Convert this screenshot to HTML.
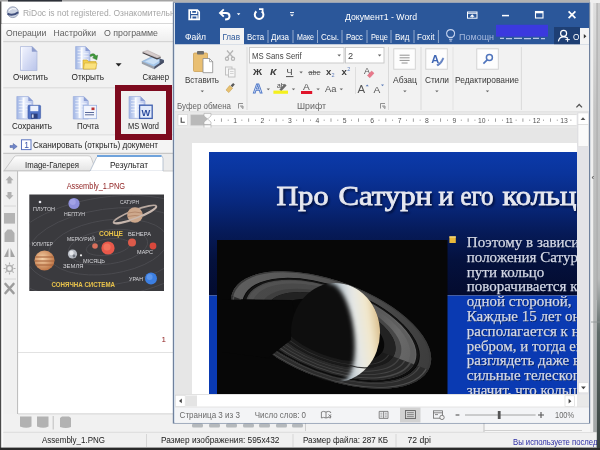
<!DOCTYPE html>
<html lang="ru">
<head>
<meta charset="utf-8">
<title>RiDoc - MS Word</title>
<style>
html,body{margin:0;padding:0;background:#f0f0f0;overflow:hidden}
body{width:600px;height:450px;font-family:"Liberation Sans",sans-serif}
svg{display:block}
</style>
</head>
<body>
<svg width="600" height="450" viewBox="0 0 600 450">
<filter id="fAll" filterUnits="userSpaceOnUse" x="0" y="0" width="600" height="450" color-interpolation-filters="sRGB"><feGaussianBlur stdDeviation="0.45" edgeMode="duplicate"/></filter>
<g filter="url(#fAll)">
<defs>
<linearGradient id="gPage" x1="0" y1="0" x2="1" y2="1">
 <stop offset="0" stop-color="#f4f6ff"/><stop offset="1" stop-color="#b9c4ea"/>
</linearGradient>
<linearGradient id="gPage2" x1="0" y1="0" x2="1" y2="0">
 <stop offset="0" stop-color="#9fb4e4"/><stop offset="0.5" stop-color="#e8eefc"/><stop offset="1" stop-color="#b4c2ea"/>
</linearGradient>
<linearGradient id="gSlide" x1="0" y1="0" x2="0" y2="1">
 <stop offset="0" stop-color="#0b3aaa"/><stop offset="0.15" stop-color="#0a349c"/><stop offset="0.35" stop-color="#08287e"/><stop offset="0.55" stop-color="#061b5a"/><stop offset="0.75" stop-color="#04113e"/><stop offset="1" stop-color="#030b2e"/>
</linearGradient>
<linearGradient id="gMenu" x1="0" y1="0" x2="0" y2="1">
 <stop offset="0" stop-color="#ffffff"/><stop offset="1" stop-color="#eeeeee"/>
</linearGradient>
<linearGradient id="gTab" x1="0" y1="0" x2="0" y2="1">
 <stop offset="0" stop-color="#ffffff"/><stop offset="1" stop-color="#e4e4e4"/>
</linearGradient>
<linearGradient id="gCres" gradientUnits="userSpaceOnUse" x1="344" y1="0" x2="381" y2="0">
 <stop offset="0" stop-color="#b8c4cc"/><stop offset="0.35" stop-color="#e6e8e6"/><stop offset="0.7" stop-color="#f2e8cc"/><stop offset="1" stop-color="#d8bc8a"/>
</linearGradient>
<filter id="fB2" x="-20%" y="-20%" width="140%" height="140%"><feGaussianBlur color-interpolation-filters="sRGB" stdDeviation="1.9"/></filter>
<radialGradient id="gJup" cx="0.4" cy="0.4" r="0.7">
 <stop offset="0" stop-color="#f6d2a8"/><stop offset="1" stop-color="#b86a3a"/>
</radialGradient>
<clipPath id="cWord"><rect x="175" y="3" width="414" height="419"/></clipPath>
<clipPath id="cSlide"><rect x="209" y="152" width="368" height="242"/></clipPath>
<clipPath id="cTitle"><rect x="0" y="0" width="173" height="24"/></clipPath>
<clipPath id="cPlanet"><ellipse cx="335.5" cy="332.5" rx="44.5" ry="49.5"/></clipPath>
<clipPath id="cFront"><polygon points="200,350 300,318 360,345 460,330 460,420 200,420"/></clipPath>
<filter id="fSh" x="-5%" y="-20%" width="110%" height="140%"><feGaussianBlur color-interpolation-filters="sRGB" stdDeviation="0.8"/></filter>
<filter id="fB" x="-5%" y="-5%" width="110%" height="110%"><feGaussianBlur color-interpolation-filters="sRGB" stdDeviation="1.2"/></filter>
<filter id="fb2" x="-5%" y="-5%" width="110%" height="110%"><feGaussianBlur color-interpolation-filters="sRGB" stdDeviation="0.5"/></filter>
</defs>
<g id="ridoc-window">
<rect x="0" y="0" width="600" height="450" fill="#f0f0f0" />
<rect x="0" y="0" width="600" height="23.5" fill="#ffffff" />
<line x1="0" y1="23.5" x2="175" y2="23.5" stroke="#d8d8d8" stroke-width="1" />
<g id="ridoc-icon"><ellipse cx="12.8" cy="12.2" rx="5.6" ry="5.4" fill="#ccd3e2" stroke="#8a94ac" stroke-width="0.8"/><path d="M7.6 13.6 q5 3 10.6 -1.4" stroke="#3f4e7c" stroke-width="2" fill="none"/><path d="M9 10.5 q3 -3 7 -1.5" stroke="#fff" stroke-width="1" fill="none"/></g>
<g clip-path="url(#cTitle)">
<text transform="translate(23 15.5) scale(0.885 1)" font-family="&quot;Liberation Sans&quot;, sans-serif" font-size="9.6" fill="#a6a6a6">RiDoc is not registered. Ознакомительная версия</text>
</g>
<rect x="2" y="24" width="172" height="17.5" fill="url(#gMenu)" />
<line x1="2" y1="41.8" x2="175" y2="41.8" stroke="#c9c9c9" stroke-width="1" />
<text x="6" y="36.1" textLength="40.4" lengthAdjust="spacingAndGlyphs" font-family="&quot;Liberation Sans&quot;, sans-serif" font-size="9.6" fill="#606060">Операции</text>
<text x="53.5" y="36.1" textLength="42.5" lengthAdjust="spacingAndGlyphs" font-family="&quot;Liberation Sans&quot;, sans-serif" font-size="9.6" fill="#606060">Настройки</text>
<text x="104" y="36.1" textLength="54" lengthAdjust="spacingAndGlyphs" font-family="&quot;Liberation Sans&quot;, sans-serif" font-size="9.6" fill="#606060">О программе</text>
<rect x="2" y="42.5" width="172" height="45" fill="#f1f1f1" />
<line x1="2" y1="88" x2="175" y2="88" stroke="#cfcfcf" stroke-width="1" />
<rect x="2" y="88.5" width="172" height="46" fill="#f1f1f1" />
<line x1="2" y1="135" x2="175" y2="135" stroke="#d4d4d4" stroke-width="1" />
<rect x="2" y="135.5" width="172" height="17.5" fill="#f4f4f4" />
<line x1="2" y1="153.3" x2="175" y2="153.3" stroke="#bdbdbd" stroke-width="1" />
<g id="btn-clear">
<path d="M20.5 46.5 h11.5 l5 5 v19 h-16.5 z" fill="url(#gPage)" stroke="#a9b4d8" stroke-width="0.7"/>
<path d="M32.0 46.5 v5 h5 z" fill="#8e9ccc" stroke="#8e9ccc" stroke-width="0.4"/>
<path d="M21.7 47.5 v22" stroke="#ffffff" stroke-width="1.2" opacity="0.8"/>
<text x="13" y="80" textLength="35" lengthAdjust="spacingAndGlyphs" font-family="&quot;Liberation Sans&quot;, sans-serif" font-size="9.2" fill="#1c1c1c">Очистить</text>
</g>
<g id="btn-open">
<path d="M75.6 46.5 h9.9 l4.5 4.5 v18.0 h-14.4 z" fill="url(#gPage2)" stroke="#9fb0dc" stroke-width="0.7"/>
<path d="M85.5 46.5 v4.5 h4.5 z" fill="#8c9ed4"/>
<path d="M81.648 47.5 v20.5" stroke="#ffffff" stroke-width="1.8" opacity="0.9"/>
<path d="M77.6 50.5 h4.32 M77.6 53.5 h4.32 M77.6 56.5 h4.32 M77.6 59.5 h4.32 M77.6 62.5 h4.32 M83.52 53.5 h5.04 M83.52 56.5 h5.04 M83.52 59.5 h5.04" stroke="#ffffff" stroke-width="0.8" opacity="0.6"/>
<g transform="translate(0 -2)">
<path d="M83 62 h4 l1.5 1.5 h7.5 v7.5 h-13 z" fill="#f3cf4e" stroke="#c9a22c" stroke-width="0.6"/>
<path d="M84.5 65 h12.5 l-1.5 6 h-12 z" fill="#fbe27e" stroke="#c9a22c" stroke-width="0.5"/>
<path d="M90 57 q4 -3 6 1 l1.6 -0.8 l-0.8 4.6 l-4.2 -2 l1.6 -0.8 q-1.6 -2.2 -3.6 -0.4 z" fill="#3f9a3a" stroke="#2a6e28" stroke-width="0.5"/>
</g>
<text x="71.6" y="80" textLength="32.4" lengthAdjust="spacingAndGlyphs" font-family="&quot;Liberation Sans&quot;, sans-serif" font-size="9.2" fill="#1c1c1c">Открыть</text>
<path d="M115.6 63.2 h6 l-3 3.2 z" fill="#222"/>
</g>
<g id="btn-scanner">
<path d="M141.8 61.6 l10.4 -5 l11.6 3.6 l-9.6 6.6 z" fill="#a4c6ea" stroke="#7d9cc4" stroke-width="0.5"/>
<path d="M145 61.4 l7.4 -3.4 l7.6 2.4 l-6.4 4.2 z" fill="#d4e6f8" opacity="0.8"/>
<path d="M141.8 61.6 v2.2 l12.4 5.4 v-2.4 z" fill="#9aa0aa"/><path d="M154.2 66.8 v2.4 l9.6 -6.6 v-2.4 z" fill="#4c546a"/>
<path d="M159.6 58.4 l4.2 1.6 v2.6 l-4.2 2.6 z" fill="#434a62" opacity="0.9"/>
<path d="M142.6 52 l5 -1.6 l13 6 l-3.6 1.4 z" fill="#d6cccc" stroke="#a89c9c" stroke-width="0.5"/>
<path d="M142.6 52.7 l14.4 6.1 l3.6 -1.4" fill="none" stroke="#4a4446" stroke-width="1.1"/>
<text x="142.6" y="80" textLength="26.4" lengthAdjust="spacingAndGlyphs" font-family="&quot;Liberation Sans&quot;, sans-serif" font-size="9.2" fill="#1c1c1c">Сканер</text>
</g>
<g id="btn-save">
<path d="M16.8 96.5 h11.5 l4.5 4.5 v18.0 h-16 z" fill="url(#gPage2)" stroke="#9fb0dc" stroke-width="0.7"/>
<path d="M28.299999999999997 96.5 v4.5 h4.5 z" fill="#8c9ed4"/>
<path d="M23.52 97.5 v20.5" stroke="#ffffff" stroke-width="1.8" opacity="0.9"/>
<path d="M18.8 100.5 h4.8 M18.8 103.5 h4.8 M18.8 106.5 h4.8 M18.8 109.5 h4.8 M18.8 112.5 h4.8 M25.6 103.5 h5.6 M25.6 106.5 h5.6 M25.6 109.5 h5.6" stroke="#ffffff" stroke-width="0.8" opacity="0.6"/>
<rect x="28" y="105.3" width="12.6" height="13.4" rx="1" fill="#5274c6" stroke="#3c57a4" stroke-width="0.6"/>
<rect x="30.3" y="105.8" width="8" height="5.4" fill="#eef2fc"/><rect x="31" y="113.6" width="6.6" height="5" fill="#2c3f7c"/><rect x="31.8" y="114.4" width="1.8" height="3.4" fill="#d0d8ee"/>
<text x="12" y="129" textLength="40" lengthAdjust="spacingAndGlyphs" font-family="&quot;Liberation Sans&quot;, sans-serif" font-size="9.2" fill="#1c1c1c">Сохранить</text>
</g>
<g id="btn-mail">
<path d="M73.3 96.5 h10.5 l4.5 4.5 v18.0 h-15 z" fill="url(#gPage2)" stroke="#9fb0dc" stroke-width="0.7"/>
<path d="M83.8 96.5 v4.5 h4.5 z" fill="#8c9ed4"/>
<path d="M79.6 97.5 v20.5" stroke="#ffffff" stroke-width="1.8" opacity="0.9"/>
<path d="M75.3 100.5 h4.5 M75.3 103.5 h4.5 M75.3 106.5 h4.5 M75.3 109.5 h4.5 M75.3 112.5 h4.5 M81.55 103.5 h5.25 M81.55 106.5 h5.25 M81.55 109.5 h5.25" stroke="#ffffff" stroke-width="0.8" opacity="0.6"/>
<rect x="83.2" y="105.3" width="13.4" height="13.4" fill="#f2f5fd" stroke="#9ab0e0" stroke-width="0.8"/>
<path d="M85 112.5 h9 M85 114.8 h9" stroke="#5a6a9a" stroke-width="1"/><rect x="91.5" y="107.5" width="3" height="2.6" fill="#b33"/>
<text x="77" y="129" textLength="22" lengthAdjust="spacingAndGlyphs" font-family="&quot;Liberation Sans&quot;, sans-serif" font-size="9.2" fill="#1c1c1c">Почта</text>
</g>
<g id="btn-msword">
<rect x="118" y="88" width="51" height="49" fill="#f0f0f0" stroke="#7d0a1e" stroke-width="6"/>
<path d="M129 96.5 h11.5 l4.5 4.5 v17.5 h-16 z" fill="url(#gPage2)" stroke="#9fb0dc" stroke-width="0.7"/>
<path d="M140.5 96.5 v4.5 h4.5 z" fill="#8c9ed4"/>
<path d="M135.72 97.5 v20" stroke="#ffffff" stroke-width="1.8" opacity="0.9"/>
<path d="M131 100.5 h4.8 M131 103.5 h4.8 M131 106.5 h4.8 M131 109.5 h4.8 M131 112.5 h4.8 M137.8 103.5 h5.6 M137.8 106.5 h5.6 M137.8 109.5 h5.6" stroke="#ffffff" stroke-width="0.8" opacity="0.6"/>
<rect x="139.6" y="105.2" width="12.6" height="13.2" fill="#e2eafa" stroke="#3f5fae" stroke-width="1.3"/>
<text x="141.6" y="115.6" textLength="8.8" lengthAdjust="spacingAndGlyphs" font-family="&quot;Liberation Sans&quot;, sans-serif" font-size="9.6" fill="#2d4d9e" font-weight="bold">W</text>
<text x="128" y="129" textLength="31" lengthAdjust="spacingAndGlyphs" font-family="&quot;Liberation Sans&quot;, sans-serif" font-size="9.2" fill="#1c1c1c">MS Word</text>
</g>
<g id="scan-row">
<path d="M10 145.5 h3.2 v-2 l4 3 l-4 3 v-2 h-3.2 z" fill="#6e84c8" stroke="#4a5f9e" stroke-width="0.5"/>
<rect x="21.5" y="139.8" width="9.5" height="9.8" fill="#ffffff" stroke="#5b74c0" stroke-width="1"/>
<text x="24.3" y="148" font-family="&quot;Liberation Sans&quot;, sans-serif" font-size="8.5" fill="#3a55a8">1</text>
<text x="33" y="148" textLength="125" lengthAdjust="spacingAndGlyphs" font-family="&quot;Liberation Sans&quot;, sans-serif" font-size="9.2" fill="#1c1c1c">Сканировать (открыть) документ</text>
</g>
<g id="tabs">
<rect x="2" y="154" width="172" height="19" fill="#ececec" />
<path d="M4 170.8 L14 157 q1 -1.2 3 -1.2 H88 q2 0 3 1.5 L96 170.8 z" fill="url(#gTab)" stroke="#b8b8b8" stroke-width="0.7"/>
<path d="M90 171.2 L96.5 157.6 q1 -2 3.5 -2 H160 q3 0 3 3 V171.2 z" fill="#ffffff" stroke="#a9b7c9" stroke-width="0.8"/>
<path d="M97 156 H161.5" stroke="#6fa3dc" stroke-width="2.2"/>
<text x="25" y="168" textLength="54" lengthAdjust="spacingAndGlyphs" font-family="&quot;Liberation Sans&quot;, sans-serif" font-size="9.2" fill="#222">Image-Галерея</text>
<text x="110" y="168" textLength="38" lengthAdjust="spacingAndGlyphs" font-family="&quot;Liberation Sans&quot;, sans-serif" font-size="9.2" fill="#222">Результат</text>
</g>
<g id="result-panel">
<rect x="2" y="171" width="16" height="262" fill="#f0f0f0" />
<rect x="17.6" y="171" width="156.4" height="243" fill="#ffffff" />
<line x1="17.6" y1="171" x2="17.6" y2="414" stroke="#b9b9b9" stroke-width="1" />
<line x1="18" y1="414" x2="174" y2="414" stroke="#c4c4c4" stroke-width="1" />
<line x1="2" y1="171" x2="90" y2="171" stroke="#c4c4c4" stroke-width="0.8" />
<line x1="163" y1="171" x2="174" y2="171" stroke="#c4c4c4" stroke-width="0.8" />
<line x1="18" y1="352.5" x2="174" y2="352.5" stroke="#e2e2e2" stroke-width="1" />
<path d="M9.5 176 l4 4.2 h-2 v3.4 h-4 v-3.4 h-2 z" fill="#b0b0b0"/>
<path d="M9.5 199.5 l4 -4.2 h-2 v-3.4 h-4 v3.4 h-2 z" fill="#b0b0b0"/>
<line x1="4" y1="206" x2="16" y2="206" stroke="#d0d0d0" stroke-width="0.8" />
<rect x="4" y="213" width="11" height="10.6" fill="#b4b4b4"/>
<path d="M4.5 233 l3 -3.5 h4 l3 3.5 v9 h-10 z" fill="#b0b0b0"/>
<path d="M4 257 l4.5 -9 v9 z M10.5 257 v-9 l4.5 9 z" fill="#a4a4a4"/>
<circle cx="9.5" cy="268.5" r="3" fill="none" stroke="#b0b0b0" stroke-width="1.6"/><path d="M9.5 262.5 v2 M9.5 272.5 v2 M3.5 268.5 h2 M13.5 268.5 h2 M5.3 264.3 l1.4 1.4 M12.3 271.3 l1.4 1.4 M5.3 272.7 l1.4 -1.4 M12.3 265.7 l1.4 -1.4" stroke="#b0b0b0" stroke-width="1.1"/>
<line x1="4" y1="279" x2="16" y2="279" stroke="#d0d0d0" stroke-width="0.8" />
<path d="M5.5 284 l8 9 M13.5 284 l-8 9" stroke="#9c9c9c" stroke-width="2.6" stroke-linecap="round"/>
<text x="66.7" y="189" textLength="58.3" lengthAdjust="spacingAndGlyphs" font-family="&quot;Liberation Sans&quot;, sans-serif" font-size="8.8" fill="#8d1c1c">Assembly_1.PNG</text>
<text x="161.5" y="342" font-family="&quot;Liberation Sans&quot;, sans-serif" font-size="8" fill="#8d1c1c">1</text>
</g>
<g id="thumbnail">
<rect x="29.3" y="194.5" width="134.7" height="96.5" fill="#3a3a3e" />
<clipPath id="cThumb"><rect x="29.3" y="194.5" width="134.7" height="96.5"/></clipPath><g clip-path="url(#cThumb)">
<ellipse cx="108" cy="247" rx="22" ry="8" fill="none" stroke="#5a5a60" stroke-width="0.5" transform="rotate(-8 108 247)"/>
<ellipse cx="108" cy="247" rx="40" ry="17" fill="none" stroke="#5a5a60" stroke-width="0.5" transform="rotate(-8 108 247)"/>
<ellipse cx="108" cy="247" rx="60" ry="27" fill="none" stroke="#5a5a60" stroke-width="0.5" transform="rotate(-8 108 247)"/>
<ellipse cx="108" cy="247" rx="82" ry="38" fill="none" stroke="#5a5a60" stroke-width="0.5" transform="rotate(-8 108 247)"/>
<ellipse cx="108" cy="247" rx="104" ry="50" fill="none" stroke="#5a5a60" stroke-width="0.5" transform="rotate(-8 108 247)"/>
</g>
<circle cx="40" cy="202" r="1.3" fill="#e8e8ee"/>
<text x="33" y="211" textLength="22" lengthAdjust="spacingAndGlyphs" font-family="&quot;Liberation Sans&quot;, sans-serif" font-size="6.2" fill="#d6d6da">ПЛУТОН</text>
<circle cx="74" cy="203.5" r="5.6" fill="#8f90dc"/><circle cx="72.8" cy="202" r="3" fill="#a9a9ea" opacity="0.7"/>
<text x="64" y="216" textLength="21" lengthAdjust="spacingAndGlyphs" font-family="&quot;Liberation Sans&quot;, sans-serif" font-size="6.2" fill="#d6d6da">НЕПТУН</text>
<text x="120" y="204" textLength="19" lengthAdjust="spacingAndGlyphs" font-family="&quot;Liberation Sans&quot;, sans-serif" font-size="6.2" fill="#d6d6da">САТУРН</text>
<ellipse cx="135" cy="214.5" rx="23" ry="4.2" fill="none" stroke="#b9a9a0" stroke-width="1.6" transform="rotate(-21 135 214.5)"/>
<circle cx="135" cy="215" r="7.8" fill="#cda88c"/><path d="M128 213 q7 -2 14 0 M127.5 216.5 q7.5 -2 15 0" stroke="#b58a6e" stroke-width="1" fill="none"/>
<path d="M113.8 222.6 A23 4.2 -21 0 0 156.4 206.3" fill="none" stroke="#c9b9b0" stroke-width="1.5"/>
<text x="99" y="236" textLength="24" lengthAdjust="spacingAndGlyphs" font-family="&quot;Liberation Sans&quot;, sans-serif" font-size="6.4" fill="#e8c24a" font-weight="bold">СОНЦЕ</text>
<circle cx="108" cy="248" r="6.6" fill="#e9584a"/><circle cx="107" cy="247" r="3.6" fill="#f47a62" opacity="0.8"/>
<text x="67" y="240.5" textLength="28" lengthAdjust="spacingAndGlyphs" font-family="&quot;Liberation Sans&quot;, sans-serif" font-size="6.2" fill="#d6d6da">МЕРКУРИЙ</text>
<circle cx="95" cy="246" r="2.8" fill="#d9705c"/>
<text x="128" y="236" textLength="23" lengthAdjust="spacingAndGlyphs" font-family="&quot;Liberation Sans&quot;, sans-serif" font-size="6.2" fill="#d6d6da">ВЕНЕРА</text>
<circle cx="132" cy="242.5" r="4" fill="#dc5a4a"/>
<text x="137" y="254" textLength="16" lengthAdjust="spacingAndGlyphs" font-family="&quot;Liberation Sans&quot;, sans-serif" font-size="6.2" fill="#d6d6da">МАРС</text>
<circle cx="153" cy="246" r="3.4" fill="#d9483c"/>
<text x="32" y="246" textLength="21" lengthAdjust="spacingAndGlyphs" font-family="&quot;Liberation Sans&quot;, sans-serif" font-size="6.2" fill="#d6d6da">ЮПИТЕР</text>
<circle cx="44.5" cy="260.5" r="10" fill="url(#gJup)"/>
<path d="M35.2 257 h18.6 M34.8 261 h19.4 M35.6 265 h17.8" stroke="#a8643c" stroke-width="1.3" opacity="0.75"/>
<circle cx="72.5" cy="254" r="4.6" fill="#b8bcc4"/><circle cx="71.5" cy="253" r="2.2" fill="#e6e8ec"/><circle cx="74" cy="256" r="1.4" fill="#70757e"/>
<circle cx="81" cy="255.3" r="1.1" fill="#f0f0f0"/>
<text x="83" y="263" textLength="22" lengthAdjust="spacingAndGlyphs" font-family="&quot;Liberation Sans&quot;, sans-serif" font-size="6.2" fill="#d6d6da">МІСЯЦЬ</text>
<text x="63" y="268" textLength="20.5" lengthAdjust="spacingAndGlyphs" font-family="&quot;Liberation Sans&quot;, sans-serif" font-size="6.2" fill="#d6d6da">ЗЕМЛЯ</text>
<text x="129" y="281" textLength="14" lengthAdjust="spacingAndGlyphs" font-family="&quot;Liberation Sans&quot;, sans-serif" font-size="6.2" fill="#d6d6da">УРАН</text>
<circle cx="151" cy="278.5" r="6" fill="#3c7fe2"/><circle cx="149.6" cy="277" r="3" fill="#69a0f0" opacity="0.7"/>
<text x="51.5" y="287" textLength="63.5" lengthAdjust="spacingAndGlyphs" font-family="&quot;Liberation Sans&quot;, sans-serif" font-size="6.4" fill="#e8c24a" font-weight="bold">СОНЯЧНА СИСТЕМА</text>
</g>
<g id="ridoc-status">
<rect x="2" y="414.5" width="598" height="18" fill="#f1f1f1" />
<path d="M20 416.5 h11.5 v10 q-5 2.5 -11.5 0 z" fill="#b2b2b2"/>
<path d="M37 416.5 h11.5 v10 q-5 2.5 -11.5 0 z" fill="#b2b2b2"/>
<line x1="53.2" y1="416" x2="53.2" y2="429.5" stroke="#b8b8b8" stroke-width="0.9" />
<path d="M60 418 l2 -1.5 h7 l2 1.5 v9 q-5 2 -11 0 z" fill="#b2b2b2"/>
<rect x="192" y="423.6" width="11" height="4" rx="1.5" fill="#aeb2b6" opacity="0.9"/>
<rect x="209" y="423.6" width="11" height="4" rx="1.5" fill="#aeb2b6" opacity="0.9"/>
<rect x="226" y="423.6" width="11" height="4" rx="1.5" fill="#aeb2b6" opacity="0.9"/>
<rect x="243" y="423.6" width="11" height="4" rx="1.5" fill="#aeb2b6" opacity="0.9"/>
<rect x="259" y="423.6" width="11" height="4" rx="1.5" fill="#aeb2b6" opacity="0.9"/>
<rect x="276" y="423.6" width="11" height="4" rx="1.5" fill="#aeb2b6" opacity="0.9"/>
<rect x="292" y="423.6" width="11" height="4" rx="1.5" fill="#aeb2b6" opacity="0.9"/>
<line x1="305.5" y1="423" x2="305.5" y2="431" stroke="#c8c8c8" stroke-width="0.9" />
<line x1="2" y1="432.3" x2="600" y2="432.3" stroke="#dcdcdc" stroke-width="1" />
<rect x="2" y="433" width="598" height="15" fill="#f0f0f0" />
<line x1="146.5" y1="434" x2="146.5" y2="447" stroke="#d6d6d6" stroke-width="1" />
<line x1="293" y1="434" x2="293" y2="447" stroke="#d6d6d6" stroke-width="1" />
<line x1="396" y1="434" x2="396" y2="447" stroke="#d6d6d6" stroke-width="1" />
<text x="42" y="443" textLength="63" lengthAdjust="spacingAndGlyphs" font-family="&quot;Liberation Sans&quot;, sans-serif" font-size="8.8" fill="#1c1c1c">Assembly_1.PNG</text>
<text x="161" y="443" textLength="118.5" lengthAdjust="spacingAndGlyphs" font-family="&quot;Liberation Sans&quot;, sans-serif" font-size="8.8" fill="#1c1c1c">Размер изображения: 595x432</text>
<text x="303" y="443" textLength="85" lengthAdjust="spacingAndGlyphs" font-family="&quot;Liberation Sans&quot;, sans-serif" font-size="8.8" fill="#1c1c1c">Размер файла: 287 КБ</text>
<text x="407.5" y="443" textLength="23.5" lengthAdjust="spacingAndGlyphs" font-family="&quot;Liberation Sans&quot;, sans-serif" font-size="8.8" fill="#1c1c1c">72 dpi</text>
<text x="513" y="445.2" textLength="84.5" lengthAdjust="spacingAndGlyphs" font-family="&quot;Liberation Sans&quot;, sans-serif" font-size="9" fill="#2b2ba4">Вы используете послед</text>
</g>
<rect x="0" y="0" width="1.4" height="450" fill="#4a4a4a" />
<rect x="1.4" y="24" width="1.8" height="424" fill="#fbfbfb" />
<rect x="0" y="447.6" width="600" height="2.4" fill="#2a2a2a" />
<rect x="0" y="0" width="600" height="1.5" fill="#a4a4a4" />
<rect x="8" y="0" width="54" height="1.5" fill="#2c3038" />
<rect x="173" y="0" width="418" height="2.5" fill="#b2b2b2" />
</g>
<g id="right-strip">
<linearGradient id="gRS1" x1="0" y1="0" x2="0" y2="1"><stop offset="0" stop-color="#dedede"/><stop offset="0.25" stop-color="#c4c4c4"/><stop offset="0.7" stop-color="#b4b6b6"/><stop offset="1" stop-color="#a4a8a8"/></linearGradient>
<linearGradient id="gRS2" x1="0" y1="0" x2="0" y2="1"><stop offset="0" stop-color="#cccccc"/><stop offset="0.62" stop-color="#b8baba"/><stop offset="0.74" stop-color="#5e6a68"/><stop offset="1" stop-color="#38423f"/></linearGradient>
<rect x="590" y="0" width="10" height="432" fill="#efefef" />
<rect x="593.2" y="3" width="3.6" height="429" fill="url(#gRS1)" />
<rect x="596.8" y="3" width="3.2" height="445" fill="url(#gRS2)" />
<line x1="597" y1="3" x2="597" y2="300" stroke="#a2a2a2" stroke-width="0.9" />
<line x1="591" y1="322" x2="600" y2="322" stroke="#8c9292" stroke-width="0.8" />
<text x="591.6" y="180" font-family="&quot;Liberation Sans&quot;, sans-serif" font-size="8" fill="#333">‹</text>
</g>
<g id="under-word">
<rect x="484" y="422" width="106" height="10" fill="#f6f6f6" />
<line x1="484" y1="422" x2="484" y2="432" stroke="#c0c0c0" stroke-width="1" />
<line x1="484" y1="430.5" x2="582" y2="430.5" stroke="#d0d0d0" stroke-width="1" />
</g>
<g id="word-window">
<rect x="172.8" y="2.3" width="417.4" height="421.3" fill="#6f819d" />
<rect x="174.1" y="2.9" width="414.9" height="419.9" fill="#e4ebf5" />
<rect x="175" y="3" width="414" height="419.7" fill="#f3f3f3" />
<rect x="175" y="3" width="414" height="41.5" fill="#2b579a" />
<g id="qat" fill="none" stroke="#fff">
<path d="M189.2 10.2 h8.2 l1.8 1.8 v7.4 h-10 z" stroke-width="1.7"/><path d="M191.6 10.4 v3 h5 v-3 M191.8 19.2 v-3.4 h5.2 v3.4" stroke-width="1.3"/>
<path d="M220.5 13 h5.4 q3.6 0 3.6 3.2 q0 3.2 -4.4 3.2" stroke-width="2"/><path d="M223.8 9.4 l-3.8 3.6 l3.8 3.6" stroke-width="1.9"/>
<path d="M236.8 13.2 h3.6 l-1.8 2 z" fill="#fff" stroke="none"/>
<path d="M261.8 11.4 a4.3 4.3 0 1 1 -5.4 0" stroke-width="2"/><path d="M259 9.2 h3.6 v3.6" stroke-width="1.7"/>
<path d="M290 12.6 h4" stroke-width="1"/><path d="M290 14.6 h4 l-2 2 z" fill="#fff" stroke="none"/>
</g>
<text x="345" y="20" textLength="72" lengthAdjust="spacingAndGlyphs" font-family="&quot;Liberation Sans&quot;, sans-serif" font-size="9.6" fill="#ffffff">Документ1 - Word</text>
<g id="win-ctl" fill="none" stroke="#fff">
<rect x="467.5" y="12" width="9.5" height="6.2" stroke-width="1"/><path d="M469.8 16.8 l2.4 -2.6 l2.4 2.6 z" fill="#fff" stroke="none"/><path d="M472.2 15 v2.6" stroke-width="1"/><path d="M467.5 13.4 h9.5" stroke-width="0.8"/>
<path d="M502 15.6 h7" stroke-width="1.5"/>
<rect x="535.5" y="11.5" width="7.5" height="6.5" stroke-width="1.1"/><path d="M535.5 12.6 h7.5" stroke-width="1.4"/>
<path d="M568.6 11.4 l6.8 6.8 M575.4 11.4 l-6.8 6.8" stroke-width="1.7"/>
</g>
<g id="word-tabs">
<text x="185" y="39.6" textLength="21" lengthAdjust="spacingAndGlyphs" font-family="&quot;Liberation Sans&quot;, sans-serif" font-size="9.4" fill="#ffffff">Файл</text>
<rect x="220" y="28" width="24" height="16.5" fill="#f3f3f3" />
<text x="222.4" y="39.6" textLength="17.6" lengthAdjust="spacingAndGlyphs" font-family="&quot;Liberation Sans&quot;, sans-serif" font-size="9.4" fill="#2b579a">Глав</text>
<text x="247" y="39.6" textLength="17" lengthAdjust="spacingAndGlyphs" font-family="&quot;Liberation Sans&quot;, sans-serif" font-size="9.4" fill="#ffffff">Вста</text>
<text x="271" y="39.6" textLength="18" lengthAdjust="spacingAndGlyphs" font-family="&quot;Liberation Sans&quot;, sans-serif" font-size="9.4" fill="#ffffff">Диза</text>
<text x="297" y="39.6" textLength="17" lengthAdjust="spacingAndGlyphs" font-family="&quot;Liberation Sans&quot;, sans-serif" font-size="9.4" fill="#ffffff">Маке</text>
<text x="321" y="39.6" textLength="18" lengthAdjust="spacingAndGlyphs" font-family="&quot;Liberation Sans&quot;, sans-serif" font-size="9.4" fill="#ffffff">Ссы.</text>
<text x="346" y="39.6" textLength="17" lengthAdjust="spacingAndGlyphs" font-family="&quot;Liberation Sans&quot;, sans-serif" font-size="9.4" fill="#ffffff">Расс</text>
<text x="371" y="39.6" textLength="17" lengthAdjust="spacingAndGlyphs" font-family="&quot;Liberation Sans&quot;, sans-serif" font-size="9.4" fill="#ffffff">Реце</text>
<text x="395" y="39.6" textLength="14.4" lengthAdjust="spacingAndGlyphs" font-family="&quot;Liberation Sans&quot;, sans-serif" font-size="9.4" fill="#ffffff">Вид</text>
<text x="417" y="39.6" textLength="17.4" lengthAdjust="spacingAndGlyphs" font-family="&quot;Liberation Sans&quot;, sans-serif" font-size="9.4" fill="#ffffff">Foxit</text>
<line x1="268" y1="30" x2="268" y2="43" stroke="#9fb3d4" stroke-width="0.9" />
<line x1="293" y1="30" x2="293" y2="43" stroke="#9fb3d4" stroke-width="0.9" />
<line x1="317.5" y1="30" x2="317.5" y2="43" stroke="#9fb3d4" stroke-width="0.9" />
<line x1="342" y1="30" x2="342" y2="43" stroke="#9fb3d4" stroke-width="0.9" />
<line x1="367" y1="30" x2="367" y2="43" stroke="#9fb3d4" stroke-width="0.9" />
<line x1="391" y1="30" x2="391" y2="43" stroke="#9fb3d4" stroke-width="0.9" />
<line x1="414" y1="30" x2="414" y2="43" stroke="#9fb3d4" stroke-width="0.9" />
<line x1="438.4" y1="30" x2="438.4" y2="43" stroke="#9fb3d4" stroke-width="0.9" />
<g fill="none" stroke="#c4d2ee" stroke-width="1.1"><path d="M448.8 37.4 q-2.6 -2 -2.2 -4.4 q0.6 -3.4 4 -3.4 q3.4 0 4 3.4 q0.4 2.4 -2.2 4.4 z"/><path d="M449 39.2 h3.4 M449.6 41 h2.2"/></g>
<text x="459" y="39.6" textLength="35" lengthAdjust="spacingAndGlyphs" font-family="&quot;Liberation Sans&quot;, sans-serif" font-size="9.4" fill="#a6b9dd">Помощн</text>
<path d="M500 38.3 h4 M506 38.6 h6 M514 38.3 h8 M524 38.6 h7 M533 38.3 h6 M541 38.6 h4" stroke="#b9c6e4" stroke-width="1.2"/>
<rect x="496" y="24.8" width="52" height="11.8" fill="#3b39de" />
<rect x="554" y="27" width="26" height="17.5" fill="#1e3f74" />
<g fill="none" stroke="#fff" stroke-width="1.2"><circle cx="563.6" cy="33.4" r="3"/><path d="M558.4 41.4 q0.6 -4.6 5.2 -4.6 q2.4 0 3.6 1.2"/><path d="M565.4 39.6 h4.4 M567.6 37.4 v4.4" stroke-width="1"/></g>
<text x="573" y="39.8" textLength="6.4" lengthAdjust="spacingAndGlyphs" font-family="&quot;Liberation Sans&quot;, sans-serif" font-size="9.6" fill="#ffffff">О</text>
<rect x="580" y="28" width="9" height="16.5" fill="#f4f4f4" />
<path d="M583.8 34 v4.6 l2.6 -2.3 z" fill="#333"/>
</g>
<g id="ribbon">
<rect x="175" y="44.5" width="414" height="67.5" fill="#f2f2f2" />
<line x1="175" y1="112" x2="589" y2="112" stroke="#d6d6d6" stroke-width="1" />
<g id="grp-clipboard">
<rect x="193.5" y="53" width="14" height="18.5" rx="1" fill="#e9bf72" stroke="#c79a4a" stroke-width="0.7"/>
<rect x="197" y="51" width="7" height="3.6" rx="0.8" fill="#6d6d6d"/>
<path d="M203 58.5 h6.5 l3.2 3.2 v11 h-9.7 z" fill="#ffffff" stroke="#8a8a8a" stroke-width="0.8"/><path d="M209.5 58.5 v3.2 h3.2" fill="none" stroke="#8a8a8a" stroke-width="0.7"/>
<text x="185" y="83" textLength="34" lengthAdjust="spacingAndGlyphs" font-family="&quot;Liberation Sans&quot;, sans-serif" font-size="9.2" fill="#3a3a3a">Вставить</text>
<path d="M200.6 90.4 h3.4 l-1.7 1.9 z" fill="#666"/>
<g stroke="#b4b4b4" stroke-width="1.2" fill="none"><path d="M227 50.5 l6 7 M233 50.5 l-6 7"/><circle cx="227" cy="58.8" r="1.6"/><circle cx="233" cy="58.8" r="1.6"/></g>
<g stroke="#bdbdbd" stroke-width="0.9" fill="#f6f6f6"><rect x="225.5" y="67" width="6.5" height="8"/><rect x="228.5" y="69" width="6.5" height="8"/></g><path d="M230 71.5 h3.6 M230 73.5 h3.6" stroke="#c6c6c6" stroke-width="0.7"/>
<path d="M226 90 l3.6 -4.4 l3 2.6 l-3.8 4.4 z" fill="#e7c070" stroke="#c29a44" stroke-width="0.5"/><path d="M230.6 85.6 l2.6 -2.6 l1.6 1.5 l-2.4 2.8 z" fill="#5a5a5a"/>
<text x="177" y="109" textLength="54" lengthAdjust="spacingAndGlyphs" font-family="&quot;Liberation Sans&quot;, sans-serif" font-size="9" fill="#666">Буфер обмена</text>
<path d="M238.5 103.5 h-0 v5 M238.5 103.5 h4.5 M240.5 106 h2.5 v2.6 M243 108.6 l-2.6 -2.6" stroke="#777" stroke-width="0.8" fill="none"/>
</g>
<line x1="247" y1="47" x2="247" y2="110" stroke="#dadada" stroke-width="1" />
<g id="grp-font">
<rect x="249.5" y="47.5" width="94.5" height="15.5" fill="#ffffff" stroke="#c6c6c6" stroke-width="0.9"/>
<rect x="345.5" y="47.5" width="38.5" height="15.5" fill="#ffffff" stroke="#c6c6c6" stroke-width="0.9"/>
<text x="252" y="59.4" textLength="49.7" lengthAdjust="spacingAndGlyphs" font-family="&quot;Liberation Sans&quot;, sans-serif" font-size="9.2" fill="#444">MS Sans Serif</text>
<text x="348" y="59.4" font-family="&quot;Liberation Sans&quot;, sans-serif" font-size="9.2" fill="#444">2</text>
<path d="M337.4 54.4 h3.6 l-1.8 2 z M377.8 54.4 h3.6 l-1.8 2 z" fill="#666"/>
<text x="253" y="75.4" textLength="9" lengthAdjust="spacingAndGlyphs" font-family="&quot;Liberation Sans&quot;, sans-serif" font-size="9.6" fill="#3a3a3a" font-weight="bold">Ж</text>
<text x="270" y="75.4" textLength="6.4" lengthAdjust="spacingAndGlyphs" font-family="&quot;Liberation Sans&quot;, sans-serif" font-size="9.6" fill="#3a3a3a" font-weight="bold" font-style="italic">К</text>
<text x="286.6" y="75" textLength="6.0" lengthAdjust="spacingAndGlyphs" font-family="&quot;Liberation Sans&quot;, sans-serif" font-size="9.4" fill="#3a3a3a">Ч</text>
<line x1="286" y1="76.6" x2="293.4" y2="76.6" stroke="#3a3a3a" stroke-width="0.9" />
<path d="M299.4 71.6 h3.4 l-1.7 1.9 z" fill="#666"/>
<text x="308.6" y="75" textLength="11.4" lengthAdjust="spacingAndGlyphs" font-family="&quot;Liberation Sans&quot;, sans-serif" font-size="8" fill="#555">abc</text>
<line x1="308" y1="72.4" x2="320.6" y2="72.4" stroke="#555" stroke-width="0.7" />
<text x="326" y="75" font-family="&quot;Liberation Sans&quot;, sans-serif" font-size="9.6" fill="#3a3a3a" font-weight="bold">x</text>
<text x="331.6" y="77" font-family="&quot;Liberation Sans&quot;, sans-serif" font-size="5.5" fill="#5a7ab8">2</text>
<text x="341.6" y="75" font-family="&quot;Liberation Sans&quot;, sans-serif" font-size="9.6" fill="#3a3a3a" font-weight="bold">x</text>
<text x="347.2" y="70.6" font-family="&quot;Liberation Sans&quot;, sans-serif" font-size="5.5" fill="#5a7ab8">2</text>
<line x1="355.5" y1="67" x2="355.5" y2="94" stroke="#dedede" stroke-width="1" />
<text x="364" y="74" font-family="&quot;Liberation Sans&quot;, sans-serif" font-size="9" fill="#555">A</text>
<path d="M367.4 75.6 l4.2 -4.6 l2.4 2.2 l-4.2 4.6 z" fill="#e8788a" stroke="#d25a70" stroke-width="0.4"/>
<text x="253" y="92.6" textLength="9.4" lengthAdjust="spacingAndGlyphs" font-family="&quot;Liberation Sans&quot;, sans-serif" font-size="13.5" fill="#eef3ff" font-weight="bold" stroke="#4f78c8" stroke-width="0.9">A</text>
<path d="M266.6 88.4 h3.4 l-1.7 1.9 z" fill="#666"/>
<text x="277" y="87.6" textLength="7.6" lengthAdjust="spacingAndGlyphs" font-family="&quot;Liberation Sans&quot;, sans-serif" font-size="7" fill="#444">ab</text>
<path d="M279.4 89.6 l5.4 -5.8 l1.8 1.6 l-5.4 5.8 z" fill="#6a6a6a"/>
<rect x="273.4" y="90.6" width="14.6" height="3.2" fill="#f4f01e" />
<path d="M291.8 88.4 h3.4 l-1.7 1.9 z" fill="#666"/>
<text x="303" y="90.4" textLength="6.8" lengthAdjust="spacingAndGlyphs" font-family="&quot;Liberation Sans&quot;, sans-serif" font-size="8.8" fill="#555">A</text>
<rect x="301" y="91" width="11.2" height="3" fill="#e0142a" />
<path d="M316.4 88.4 h3.4 l-1.7 1.9 z" fill="#666"/>
<text x="325" y="91.6" textLength="11.4" lengthAdjust="spacingAndGlyphs" font-family="&quot;Liberation Sans&quot;, sans-serif" font-size="9.4" fill="#555">Aa</text>
<path d="M339.6 88.4 h3.4 l-1.7 1.9 z" fill="#666"/>
<text x="357.4" y="92.6" textLength="7.6" lengthAdjust="spacingAndGlyphs" font-family="&quot;Liberation Sans&quot;, sans-serif" font-size="10.6" fill="#555">A</text>
<path d="M365.6 86.2 l1.6 -1.8 l1.6 1.8 z" fill="#5a7ab8"/>
<text x="373.6" y="92.6" textLength="6.8" lengthAdjust="spacingAndGlyphs" font-family="&quot;Liberation Sans&quot;, sans-serif" font-size="9.4" fill="#555">A</text>
<path d="M381 84.6 l1.5 1.7 l1.5 -1.7 z" fill="#5a7ab8"/>
<text x="297" y="109" textLength="29" lengthAdjust="spacingAndGlyphs" font-family="&quot;Liberation Sans&quot;, sans-serif" font-size="9" fill="#666">Шрифт</text>
<path d="M380.5 103.5 v5 M380.5 103.5 h4.5 M382.5 106 h2.5 v2.6 M385 108.6 l-2.6 -2.6" stroke="#777" stroke-width="0.8" fill="none"/>
</g>
<line x1="388.5" y1="47" x2="388.5" y2="110" stroke="#dadada" stroke-width="1" />
<g id="grp-para">
<rect x="393.8" y="48.8" width="21.5" height="20.4" fill="#fdfdfd" stroke="#d0d0d0" stroke-width="0.9"/>
<path d="M399.6 55.2 h10 M399.6 57.8 h10 M399.6 60.4 h10 M401.6 63 h6" stroke="#777" stroke-width="0.8"/>
<text x="393" y="83" textLength="24" lengthAdjust="spacingAndGlyphs" font-family="&quot;Liberation Sans&quot;, sans-serif" font-size="9.2" fill="#3a3a3a">Абзац</text>
<path d="M403.2 90.4 h3.4 l-1.7 1.9 z" fill="#666"/>
</g>
<line x1="421" y1="47" x2="421" y2="110" stroke="#dadada" stroke-width="1" />
<g id="grp-styles">
<rect x="425.8" y="48.8" width="21.5" height="20.4" fill="#fdfdfd" stroke="#d0d0d0" stroke-width="0.9"/>
<text x="431.2" y="63.4" font-family="&quot;Liberation Sans&quot;, sans-serif" font-size="11" fill="#3f66b4" font-weight="bold">A</text>
<path d="M436.8 64.6 q3.8 -1.4 6 -6.8 l1 0.8 q-2 5.6 -6 7.4 z" fill="#6a86c4" stroke="#3f66b4" stroke-width="0.5"/>
<text x="425" y="83" textLength="24" lengthAdjust="spacingAndGlyphs" font-family="&quot;Liberation Sans&quot;, sans-serif" font-size="9.2" fill="#3a3a3a">Стили</text>
<path d="M435.2 90.4 h3.4 l-1.7 1.9 z" fill="#666"/>
</g>
<line x1="453" y1="47" x2="453" y2="110" stroke="#e2e2e2" stroke-width="1" />
<g id="grp-edit">
<rect x="476.8" y="48.8" width="21.5" height="20.4" fill="#fdfdfd" stroke="#d0d0d0" stroke-width="0.9"/>
<circle cx="489.4" cy="57.4" r="3" fill="none" stroke="#4f74bc" stroke-width="1.5"/><path d="M487.2 59.8 l-3.8 3.8" stroke="#4f74bc" stroke-width="1.7"/>
<text x="455" y="83" textLength="64" lengthAdjust="spacingAndGlyphs" font-family="&quot;Liberation Sans&quot;, sans-serif" font-size="9.2" fill="#3a3a3a">Редактирование</text>
<path d="M485.8 90.4 h3.4 l-1.7 1.9 z" fill="#666"/>
</g>
<line x1="521.4" y1="47" x2="521.4" y2="110" stroke="#dadada" stroke-width="1" />
<path d="M576.4 107.4 l2.8 -2.9 l2.8 2.9" stroke="#555" stroke-width="1.3" fill="none"/>
</g>
<g id="ruler">
<rect x="175" y="112.5" width="402" height="15" fill="#e9e9e9" />
<rect x="178" y="114.6" width="9.6" height="11" fill="#ffffff" stroke="#d0d0d0" stroke-width="0.6"/>
<path d="M181.2 117.6 v4.6 h3.6" stroke="#444" stroke-width="1.1" fill="none"/>
<rect x="190.6" y="114.8" width="17.4" height="10.6" fill="#b9b9b9" />
<rect x="208" y="114.8" width="368.6" height="10.6" fill="#ffffff" />
<line x1="190.6" y1="114.6" x2="576.6" y2="114.6" stroke="#d2d2d2" stroke-width="0.6" />
<line x1="190.6" y1="125.6" x2="576.6" y2="125.6" stroke="#d2d2d2" stroke-width="0.6" />
<text x="235.01999999999998" y="122.8" text-anchor="middle" font-family="&quot;Liberation Sans&quot;, sans-serif" font-size="6.8" fill="#555">1</text>
<text x="262.44" y="122.8" text-anchor="middle" font-family="&quot;Liberation Sans&quot;, sans-serif" font-size="6.8" fill="#555">2</text>
<text x="289.86" y="122.8" text-anchor="middle" font-family="&quot;Liberation Sans&quot;, sans-serif" font-size="6.8" fill="#555">3</text>
<text x="317.28" y="122.8" text-anchor="middle" font-family="&quot;Liberation Sans&quot;, sans-serif" font-size="6.8" fill="#555">4</text>
<text x="344.70000000000005" y="122.8" text-anchor="middle" font-family="&quot;Liberation Sans&quot;, sans-serif" font-size="6.8" fill="#555">5</text>
<text x="372.12" y="122.8" text-anchor="middle" font-family="&quot;Liberation Sans&quot;, sans-serif" font-size="6.8" fill="#555">6</text>
<text x="399.53999999999996" y="122.8" text-anchor="middle" font-family="&quot;Liberation Sans&quot;, sans-serif" font-size="6.8" fill="#555">7</text>
<text x="426.96000000000004" y="122.8" text-anchor="middle" font-family="&quot;Liberation Sans&quot;, sans-serif" font-size="6.8" fill="#555">8</text>
<text x="454.38" y="122.8" text-anchor="middle" font-family="&quot;Liberation Sans&quot;, sans-serif" font-size="6.8" fill="#555">9</text>
<text x="481.80000000000007" y="122.8" text-anchor="middle" font-family="&quot;Liberation Sans&quot;, sans-serif" font-size="6.8" fill="#555">10</text>
<text x="509.22" y="122.8" text-anchor="middle" font-family="&quot;Liberation Sans&quot;, sans-serif" font-size="6.8" fill="#555">11</text>
<text x="536.64" y="122.8" text-anchor="middle" font-family="&quot;Liberation Sans&quot;, sans-serif" font-size="6.8" fill="#555">12</text>
<text x="564.0600000000001" y="122.8" text-anchor="middle" font-family="&quot;Liberation Sans&quot;, sans-serif" font-size="6.8" fill="#555">13</text>
<rect x="214.1" y="119.6" width="0.7" height="1.2" fill="#777" />
<rect x="227.81" y="119.6" width="0.7" height="1.2" fill="#777" />
<rect x="241.53" y="119.6" width="0.7" height="1.2" fill="#777" />
<rect x="255.23" y="119.6" width="0.7" height="1.2" fill="#777" />
<rect x="268.94" y="119.6" width="0.7" height="1.2" fill="#777" />
<rect x="282.65" y="119.6" width="0.7" height="1.2" fill="#777" />
<rect x="296.37" y="119.6" width="0.7" height="1.2" fill="#777" />
<rect x="310.07" y="119.6" width="0.7" height="1.2" fill="#777" />
<rect x="323.78" y="119.6" width="0.7" height="1.2" fill="#777" />
<rect x="337.5" y="119.6" width="0.7" height="1.2" fill="#777" />
<rect x="351.2" y="119.6" width="0.7" height="1.2" fill="#777" />
<rect x="364.91" y="119.6" width="0.7" height="1.2" fill="#777" />
<rect x="378.62" y="119.6" width="0.7" height="1.2" fill="#777" />
<rect x="392.33" y="119.6" width="0.7" height="1.2" fill="#777" />
<rect x="406.04" y="119.6" width="0.7" height="1.2" fill="#777" />
<rect x="419.75" y="119.6" width="0.7" height="1.2" fill="#777" />
<rect x="433.46" y="119.6" width="0.7" height="1.2" fill="#777" />
<rect x="447.17" y="119.6" width="0.7" height="1.2" fill="#777" />
<rect x="460.88" y="119.6" width="0.7" height="1.2" fill="#777" />
<rect x="474.6" y="119.6" width="0.7" height="1.2" fill="#777" />
<rect x="488.3" y="119.6" width="0.7" height="1.2" fill="#777" />
<rect x="502.01" y="119.6" width="0.7" height="1.2" fill="#777" />
<rect x="515.73" y="119.6" width="0.7" height="1.2" fill="#777" />
<rect x="529.43" y="119.6" width="0.7" height="1.2" fill="#777" />
<rect x="543.14" y="119.6" width="0.7" height="1.2" fill="#777" />
<rect x="556.86" y="119.6" width="0.7" height="1.2" fill="#777" />
<rect x="570.56" y="119.6" width="0.7" height="1.2" fill="#777" />
<rect x="220.96" y="118.4" width="0.7" height="3.4" fill="#777" />
<rect x="248.38" y="118.4" width="0.7" height="3.4" fill="#777" />
<rect x="275.8" y="118.4" width="0.7" height="3.4" fill="#777" />
<rect x="303.22" y="118.4" width="0.7" height="3.4" fill="#777" />
<rect x="330.64" y="118.4" width="0.7" height="3.4" fill="#777" />
<rect x="358.06" y="118.4" width="0.7" height="3.4" fill="#777" />
<rect x="385.48" y="118.4" width="0.7" height="3.4" fill="#777" />
<rect x="412.9" y="118.4" width="0.7" height="3.4" fill="#777" />
<rect x="440.32" y="118.4" width="0.7" height="3.4" fill="#777" />
<rect x="467.74" y="118.4" width="0.7" height="3.4" fill="#777" />
<rect x="495.16" y="118.4" width="0.7" height="3.4" fill="#777" />
<rect x="522.58" y="118.4" width="0.7" height="3.4" fill="#777" />
<rect x="550.0" y="118.4" width="0.7" height="3.4" fill="#777" />
<rect x="577.42" y="118.4" width="0.7" height="3.4" fill="#777" />
<path d="M204 113.4 h7 v2.6 l-3.5 3 l-3.5 -3 z" fill="#fafafa" stroke="#a8a8a8" stroke-width="0.6"/>
<path d="M204 124.6 v-2.6 l3.5 -3 l3.5 3 v2.6 z M204 124.8 h7 v3.6 h-7 z" fill="#fafafa" stroke="#a8a8a8" stroke-width="0.6"/>
</g>
<g id="doc-area">
<rect x="175" y="127.5" width="402" height="267" fill="#e6e6e6" />
<rect x="192" y="143" width="385" height="251.5" fill="#ffffff" />
<rect x="577" y="112.5" width="12" height="294.5" fill="#e3e3e7" />
<rect x="578" y="113" width="10.4" height="11.4" fill="#ffffff" stroke="#d8d8d8" stroke-width="0.5"/>
<path d="M580.6 120 l2.4 -2.8 l2.4 2.8 z" fill="#555"/>
<rect x="578" y="124.6" width="10.4" height="22" fill="#fafafa" stroke="#d4d4d4" stroke-width="0.5"/>
<rect x="578.6" y="382.8" width="9.8" height="10" fill="#ffffff" stroke="#d8d8d8" stroke-width="0.5"/>
<path d="M581 386.4 l2.4 2.8 l2.4 -2.8 z" fill="#444"/>
</g>
<g id="slide" clip-path="url(#cSlide)">
<rect x="209" y="152" width="368" height="143.5" fill="url(#gSlide)" />
<rect x="209" y="295.5" width="368" height="100" fill="#0a3ab2" />
<g id="slide-title">
<text x="278.20000000000005" y="207" textLength="51.9" lengthAdjust="spacingAndGlyphs" font-family="&quot;Liberation Serif&quot;, serif" font-size="26.6" fill="#000a2a" opacity="0.8" stroke="#000a2a" stroke-width="0.7" filter="url(#fSh)">Про</text>
<text x="340.0" y="207" textLength="93.6" lengthAdjust="spacingAndGlyphs" font-family="&quot;Liberation Serif&quot;, serif" font-size="26.6" fill="#000a2a" opacity="0.8" stroke="#000a2a" stroke-width="0.7" filter="url(#fSh)">Сатурн</text>
<text x="440.20000000000005" y="207" textLength="15.0" lengthAdjust="spacingAndGlyphs" font-family="&quot;Liberation Serif&quot;, serif" font-size="26.6" fill="#000a2a" opacity="0.8" stroke="#000a2a" stroke-width="0.7" filter="url(#fSh)">и</text>
<text x="462.1" y="207" textLength="33.0" lengthAdjust="spacingAndGlyphs" font-family="&quot;Liberation Serif&quot;, serif" font-size="26.6" fill="#000a2a" opacity="0.8" stroke="#000a2a" stroke-width="0.7" filter="url(#fSh)">его</text>
<text x="504.1" y="207" textLength="87.5" lengthAdjust="spacingAndGlyphs" font-family="&quot;Liberation Serif&quot;, serif" font-size="26.6" fill="#000a2a" opacity="0.8" stroke="#000a2a" stroke-width="0.7" filter="url(#fSh)">кольца</text>
<text x="276.6" y="205.4" textLength="51.9" lengthAdjust="spacingAndGlyphs" font-family="&quot;Liberation Serif&quot;, serif" font-size="26.6" fill="#e6e8f0" stroke="#e6e8f0" stroke-width="0.8">Про</text>
<text x="338.4" y="205.4" textLength="93.6" lengthAdjust="spacingAndGlyphs" font-family="&quot;Liberation Serif&quot;, serif" font-size="26.6" fill="#e6e8f0" stroke="#e6e8f0" stroke-width="0.8">Сатурн</text>
<text x="438.6" y="205.4" textLength="15.0" lengthAdjust="spacingAndGlyphs" font-family="&quot;Liberation Serif&quot;, serif" font-size="26.6" fill="#e6e8f0" stroke="#e6e8f0" stroke-width="0.8">и</text>
<text x="460.5" y="205.4" textLength="33.0" lengthAdjust="spacingAndGlyphs" font-family="&quot;Liberation Serif&quot;, serif" font-size="26.6" fill="#e6e8f0" stroke="#e6e8f0" stroke-width="0.8">его</text>
<text x="502.5" y="205.4" textLength="87.5" lengthAdjust="spacingAndGlyphs" font-family="&quot;Liberation Serif&quot;, serif" font-size="26.6" fill="#e6e8f0" stroke="#e6e8f0" stroke-width="0.8">кольца</text>
</g>
<rect x="217" y="240" width="230.5" height="156" fill="#070707" />
<g id="saturn">
<clipPath id="cFrontHalf"><rect x="-130" y="3" width="260" height="80"/></clipPath>
<linearGradient id="gRingA" gradientUnits="userSpaceOnUse" x1="-106" y1="0" x2="106" y2="0"><stop offset="0" stop-color="#5e5e5e"/><stop offset="0.5" stop-color="#505050"/><stop offset="1" stop-color="#3c3c3c"/></linearGradient>
<linearGradient id="gRingB" gradientUnits="userSpaceOnUse" x1="-106" y1="0" x2="106" y2="0"><stop offset="0" stop-color="#484848"/><stop offset="0.55" stop-color="#4a4a4a"/><stop offset="0.8" stop-color="#6a6a6a"/><stop offset="1" stop-color="#5a5a5a"/></linearGradient>
<g filter="url(#fb2)">
<g transform="translate(331 330) rotate(20.6)">
<g transform="scale(1 0.462)" fill="none">
<circle r="99.5" stroke="url(#gRingA)" stroke-width="12" opacity="1"/>
<circle r="104.5" stroke="#3a3a3a" stroke-width="2" opacity="1"/>
<circle r="91.5" stroke="#141414" stroke-width="2.4" opacity="1"/>
<circle r="79" stroke="url(#gRingB)" stroke-width="22" opacity="1"/>
<circle r="86" stroke="#585858" stroke-width="5" opacity="0.6"/>
<circle r="71" stroke="#3a3a3a" stroke-width="6" opacity="0.7"/>
<circle r="62" stroke="#222222" stroke-width="12" opacity="1"/>
</g>
</g>
</g>
<path d="M224 299 L292 300 L300 345 L270 359 L224 349 z" fill="#070707" filter="url(#fb2)"/>
<ellipse cx="335.5" cy="332.5" rx="44.5" ry="49.5" fill="#0e0e0e"/>
<g filter="url(#fb2)">
<g transform="translate(331 330) rotate(20.6)">
<g clip-path="url(#cFrontHalf)">
<g transform="scale(1 0.462)" fill="none">
<circle r="99.5" stroke="#2c2c2c" stroke-width="12" opacity="1"/>
<circle r="103" stroke="#505050" stroke-width="1.5" opacity="1"/>
<circle r="96" stroke="#484848" stroke-width="1.2" opacity="1"/>
<circle r="91.5" stroke="#0e0e0e" stroke-width="2.4" opacity="1"/>
<circle r="79" stroke="#292929" stroke-width="22" opacity="1"/>
<circle r="86" stroke="#4a4a4a" stroke-width="2" opacity="1"/>
<circle r="80" stroke="#454545" stroke-width="1.4" opacity="1"/>
<circle r="74" stroke="#424242" stroke-width="1.6" opacity="1"/>
<circle r="62" stroke="#1a1a1a" stroke-width="12" opacity="1"/>
<circle r="63" stroke="#333333" stroke-width="1.2" opacity="1"/>
</g>
</g>
</g>
</g>
<path d="M222 299.5 L291 300.5 L291 340 L268 358 L222 352 z" fill="#070707" filter="url(#fb2)"/>
<g clip-path="url(#cPlanet)">
<g filter="url(#fB2)" transform="rotate(-7.5 335.5 332.5)"><path d="M335.5 272 A62 60 0 0 1 335.5 393 V382 A18.5 49.5 0 0 0 335.5 283 z" fill="url(#gCres)"/></g>
</g>
<path d="M350 365.5 q12 4 24 1.5" stroke="#1c1c1c" stroke-width="1.3" fill="none" opacity="0.85"/>
</g>
<rect x="449.4" y="236.4" width="6.4" height="6.6" fill="#e9b83a" />
<rect x="449.4" y="236.4" width="6.4" height="1.2" fill="#f6dc86" />
<text x="467.6" y="247.8" font-family="&quot;Liberation Serif&quot;, serif" font-size="15" fill="#04102e" opacity="0.7">Поэтому в зависимости</text>
<text x="466.8" y="246.9" font-family="&quot;Liberation Serif&quot;, serif" font-size="15" fill="#d4d8e6" stroke="#d4d8e6" stroke-width="0.25">Поэтому в зависимости</text>
<text x="467.6" y="262.59999999999997" font-family="&quot;Liberation Serif&quot;, serif" font-size="15" fill="#04102e" opacity="0.7">положения Сатурна</text>
<text x="466.8" y="261.7" font-family="&quot;Liberation Serif&quot;, serif" font-size="15" fill="#d4d8e6" stroke="#d4d8e6" stroke-width="0.25">положения Сатурна</text>
<text x="467.6" y="277.4" font-family="&quot;Liberation Serif&quot;, serif" font-size="15" fill="#04102e" opacity="0.7">пути кольцо</text>
<text x="466.8" y="276.5" font-family="&quot;Liberation Serif&quot;, serif" font-size="15" fill="#d4d8e6" stroke="#d4d8e6" stroke-width="0.25">пути кольцо</text>
<text x="467.6" y="292.2" font-family="&quot;Liberation Serif&quot;, serif" font-size="15" fill="#04102e" opacity="0.7">поворачивается к нам</text>
<text x="466.8" y="291.3" font-family="&quot;Liberation Serif&quot;, serif" font-size="15" fill="#d4d8e6" stroke="#d4d8e6" stroke-width="0.25">поворачивается к нам</text>
<text x="467.6" y="307.0" font-family="&quot;Liberation Serif&quot;, serif" font-size="15" fill="#04102e" opacity="0.7">одной стороной,</text>
<text x="466.8" y="306.1" font-family="&quot;Liberation Serif&quot;, serif" font-size="15" fill="#d4d8e6" stroke="#d4d8e6" stroke-width="0.25">одной стороной,</text>
<text x="467.6" y="321.79999999999995" font-family="&quot;Liberation Serif&quot;, serif" font-size="15" fill="#04102e" opacity="0.7">Каждые 15 лет оно</text>
<text x="466.8" y="320.9" font-family="&quot;Liberation Serif&quot;, serif" font-size="15" fill="#d4d8e6" stroke="#d4d8e6" stroke-width="0.25">Каждые 15 лет оно</text>
<text x="467.6" y="336.59999999999997" font-family="&quot;Liberation Serif&quot;, serif" font-size="15" fill="#04102e" opacity="0.7">располагается к нам</text>
<text x="466.8" y="335.7" font-family="&quot;Liberation Serif&quot;, serif" font-size="15" fill="#d4d8e6" stroke="#d4d8e6" stroke-width="0.25">располагается к нам</text>
<text x="467.6" y="351.4" font-family="&quot;Liberation Serif&quot;, serif" font-size="15" fill="#04102e" opacity="0.7">ребром, и тогда его</text>
<text x="466.8" y="350.5" font-family="&quot;Liberation Serif&quot;, serif" font-size="15" fill="#d4d8e6" stroke="#d4d8e6" stroke-width="0.25">ребром, и тогда его</text>
<text x="467.6" y="366.2" font-family="&quot;Liberation Serif&quot;, serif" font-size="15" fill="#04102e" opacity="0.7">разглядеть даже в</text>
<text x="466.8" y="365.3" font-family="&quot;Liberation Serif&quot;, serif" font-size="15" fill="#d4d8e6" stroke="#d4d8e6" stroke-width="0.25">разглядеть даже в</text>
<text x="467.6" y="381.0" font-family="&quot;Liberation Serif&quot;, serif" font-size="15" fill="#04102e" opacity="0.7">сильные телескопы</text>
<text x="466.8" y="380.1" font-family="&quot;Liberation Serif&quot;, serif" font-size="15" fill="#d4d8e6" stroke="#d4d8e6" stroke-width="0.25">сильные телескопы</text>
<text x="467.6" y="395.79999999999995" font-family="&quot;Liberation Serif&quot;, serif" font-size="15" fill="#04102e" opacity="0.7">значит, что кольца</text>
<text x="466.8" y="394.9" font-family="&quot;Liberation Serif&quot;, serif" font-size="15" fill="#d4d8e6" stroke="#d4d8e6" stroke-width="0.25">значит, что кольца</text>
</g>
<g id="word-status">
<rect x="175" y="394.5" width="402" height="12.5" fill="#ffffff" />
<line x1="175" y1="394.5" x2="577" y2="394.5" stroke="#dcdcdc" stroke-width="0.8" />
<rect x="175.6" y="395.4" width="9.6" height="11" fill="#ffffff" stroke="#d4d4d4" stroke-width="0.6"/>
<path d="M181.8 398.6 v4.6 l-2.8 -2.3 z" fill="#444"/>
<rect x="185.6" y="395.4" width="11.4" height="11" fill="#e4e4e4" />
<rect x="565" y="395.8" width="9.4" height="10.8" fill="#ffffff" stroke="#d4d4d4" stroke-width="0.6"/>
<path d="M568.6 398.8 v4.8 l2.8 -2.4 z" fill="#444"/>
<rect x="577" y="394.5" width="12" height="12.5" fill="#e9e9e9" />
<rect x="175" y="407" width="414" height="15.7" fill="#f3f4f6" />
<line x1="175" y1="407" x2="589" y2="407" stroke="#dedede" stroke-width="0.8" />
<text x="179.6" y="418" textLength="60.4" lengthAdjust="spacingAndGlyphs" font-family="&quot;Liberation Sans&quot;, sans-serif" font-size="8.8" fill="#6a6a6a">Страница 3 из 3</text>
<text x="254.7" y="418" textLength="51.3" lengthAdjust="spacingAndGlyphs" font-family="&quot;Liberation Sans&quot;, sans-serif" font-size="8.8" fill="#6a6a6a">Число слов: 0</text>
<g fill="none" stroke="#6a6a6a" stroke-width="0.8"><path d="M326 412 q-2.6 -1.2 -4.6 0 v6 q2 -1.2 4.6 0 q2.6 -1.2 4.6 0 v-2.4 M326 412 v6 M326 412 q2.6 -1.2 4.6 0 v1"/><path d="M328.6 414.4 l2.4 2.4 M331 414.4 l-2.4 2.4"/></g>
<g fill="none" stroke="#6a6a6a" stroke-width="0.8"><path d="M383.6 411.4 h-4.4 v7 h4.4 M383.6 411.4 v7 M383.6 411.4 h4.4 v7 h-4.4"/><path d="M380.4 413.2 h2 M380.4 415 h2 M380.4 416.8 h2 M384.8 413.2 h2 M384.8 415 h2 M384.8 416.8 h2" stroke-width="0.6"/></g>
<rect x="400" y="407.5" width="20.5" height="15" fill="#d2d2d2" />
<g fill="none" stroke="#555" stroke-width="0.8"><rect x="405.4" y="410.6" width="10" height="8"/><path d="M407 412.6 h6.8 M407 414.6 h6.8 M407 416.6 h6.8" stroke-width="0.6"/></g>
<g fill="none" stroke="#6a6a6a" stroke-width="0.8"><rect x="433.4" y="410.8" width="9" height="7.4"/><path d="M433.4 412.8 h9 M435 414.6 h3"/><circle cx="442" cy="417.4" r="2.2" fill="#f1f1f1"/></g>
<line x1="455.6" y1="415" x2="459.4" y2="415" stroke="#555" stroke-width="1.1" />
<line x1="465" y1="415" x2="535.6" y2="415" stroke="#9a9a9a" stroke-width="0.9" />
<rect x="497.8" y="411" width="2.8" height="8" fill="#555" />
<path d="M538 415 h6 M541 412 v6" stroke="#555" stroke-width="1.1"/>
<text x="555" y="418" textLength="19" lengthAdjust="spacingAndGlyphs" font-family="&quot;Liberation Sans&quot;, sans-serif" font-size="8.8" fill="#6a6a6a">100%</text>
</g>
</g>
</g>
</svg>
</body>
</html>
